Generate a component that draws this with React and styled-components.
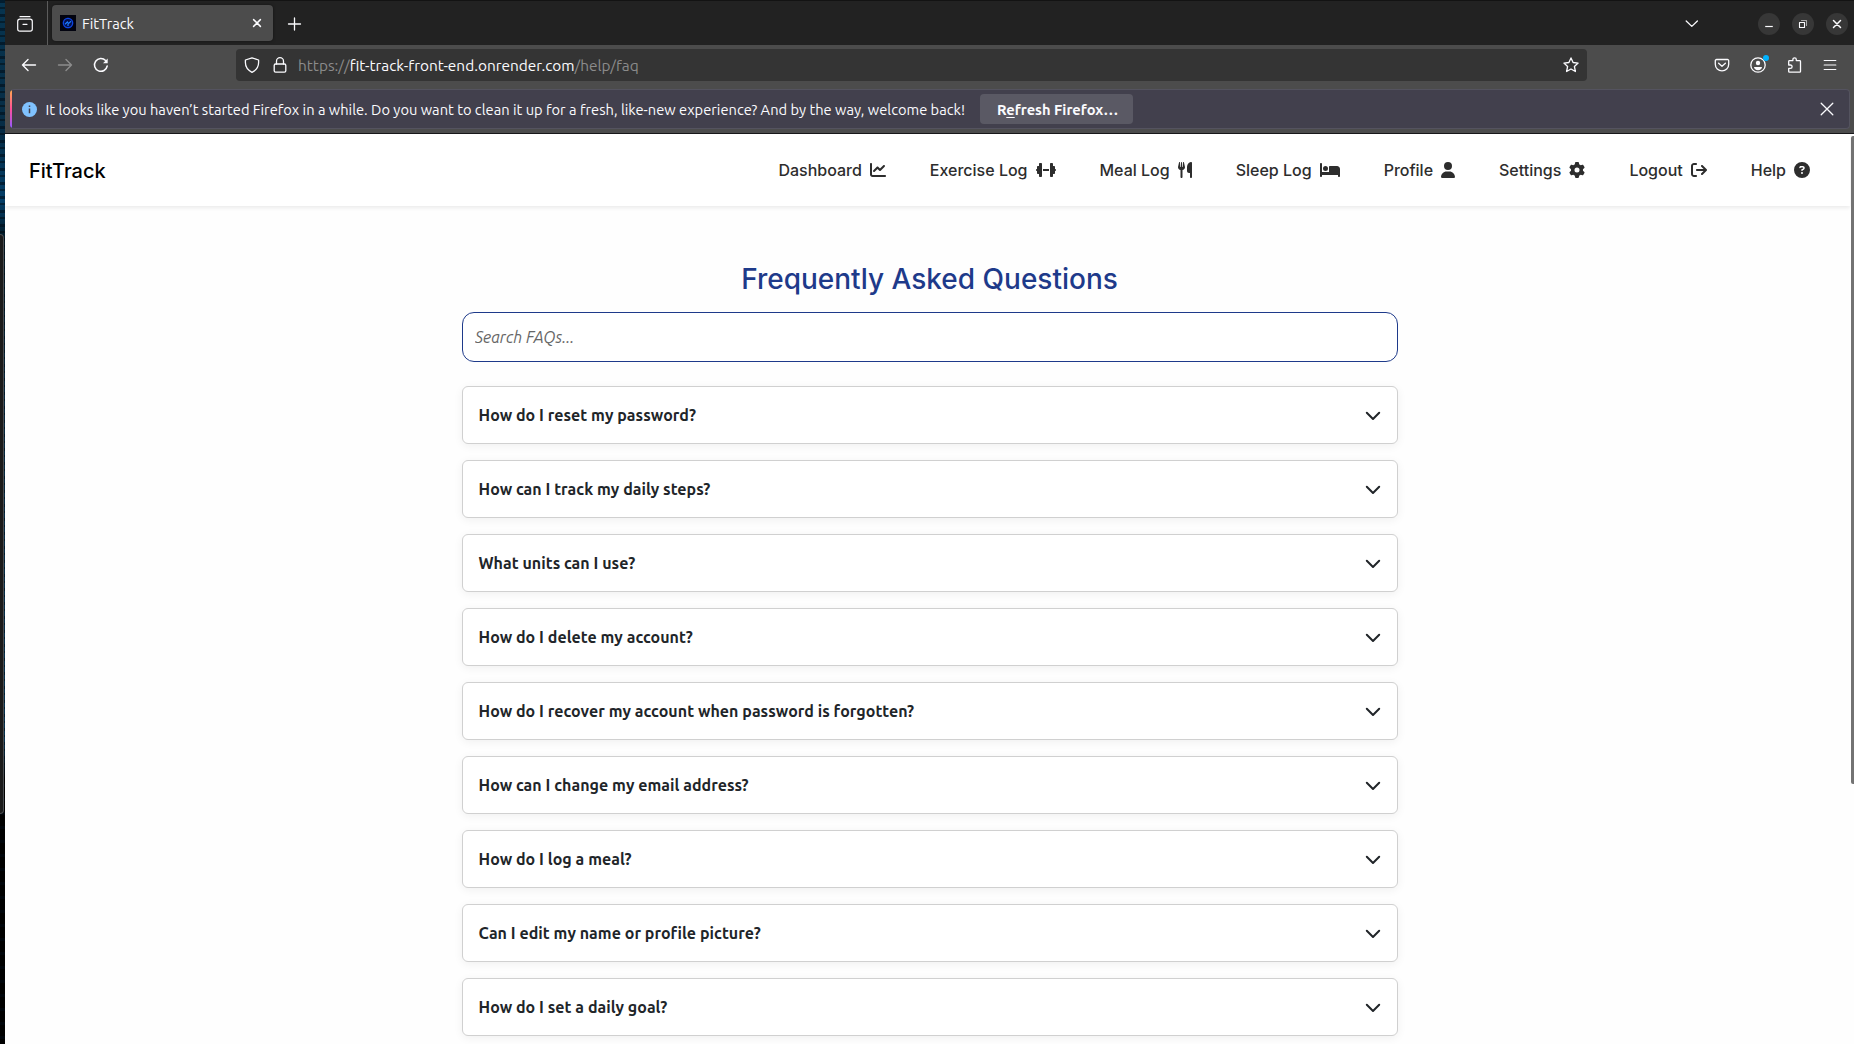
import React from "react";
import styled, { createGlobalStyle } from "styled-components";
import {
  FaChartLine,
  FaDumbbell,
  FaUtensils,
  FaBed,
  FaUser,
  FaGear,
  FaArrowRightFromBracket,
  FaCircleQuestion,
} from "react-icons/fa6";

const ui = `Ubuntu, "Noto Sans", "Open Sans", sans-serif`;
const inter = `Inter, "Liberation Sans", sans-serif`;

const GlobalStyle = createGlobalStyle`
  *, *::before, *::after { box-sizing: border-box; }
  body { margin: 0; background: #000; overflow: hidden; }
  button, input { font: inherit; color: inherit; }
`;

const Screen = styled.div`
  display: flex;
  width: 1854px;
  height: 1044px;
  overflow: hidden;
`;

const Desktop = styled.div`
  flex: none;
  width: 5px;
  display: flex;
  flex-direction: column;
  background:
    repeating-linear-gradient(180deg, rgba(0, 10, 20, 0.55) 0 3px, transparent 3px 7px, rgba(0, 0, 0, 0.4) 7px 9px, transparent 9px 14px),
    linear-gradient(180deg, #07344f 0, #062c45 130px, #05406a 200px, #021722 240px, #04263c 400px, #03314f 740px, #000 780px);
`;

const BackWindow = styled.div`
  margin-top: 234px;
  width: 4px;
  height: 580px;
  background: #1b1b1b;
  border: 1px solid #4a4d50;
  border-left: 0;
  border-radius: 0 5px 5px 0;
`;

const Browser = styled.div`
  flex: 1;
  min-width: 0;
  display: flex;
  flex-direction: column;
  font-family: ${ui};
  color: #fbfbfe;
`;

const TabStrip = styled.div`
  display: flex;
  height: 45px;
  flex: none;
  border-top: 1px solid #131313;
  background: #222;
`;

const ViewButton = styled.div`
  width: 43px;
  border-right: 1px solid #5c5c5c;
  display: flex;
  align-items: center;
  padding: 2px 0 0 12px;
`;

const Tab = styled.div`
  display: flex;
  align-items: center;
  width: 221px;
  height: 36px;
  margin: 4px 0 0 4px;
  padding: 0 8px;
  border-radius: 4px;
  background: #4c4c4c;
  box-shadow: 0 0 3px rgba(0, 0, 0, 0.5);
`;

const TabTitle = styled.span`
  flex: 1;
  margin-left: 6px;
  padding-top: 1px;
  font-size: 14.67px;
  line-height: 20px;
`;

const NewTab = styled.div`
  display: flex;
  align-items: center;
  margin-left: 14px;
  padding-top: 1px;
`;

const WindowControls = styled.div`
  display: flex;
  align-items: center;
  margin-left: auto;
  padding: 1px 6px 0 0;
  gap: 12px;
`;

const TabsMenu = styled.div`
  display: flex;
  margin-right: 46px;
`;

const RoundButton = styled.div`
  display: grid;
  place-items: center;
  width: 22px;
  height: 22px;
  border-radius: 50%;
  background: #373737;
`;

const NavBar = styled.div`
  display: flex;
  align-items: center;
  height: 40px;
  flex: none;
  padding-left: 16px;
  background: #4c4c4c;
`;

const NavButtons = styled.div`
  display: flex;
  gap: 20px;
  width: 215px;
`;

const UrlBar = styled.div`
  display: flex;
  align-items: center;
  width: 1351px;
  height: 32px;
  padding: 0 8px;
  border-radius: 4px;
  background: #343434;
`;

const LockSlot = styled.span`
  display: flex;
  margin-left: 12px;
`;

const Url = styled.span`
  flex: 1;
  margin-left: 10px;
  font-size: 15.4px;
  color: #8b8b8b;
  white-space: nowrap;
`;

const Host = styled.span`
  color: #fbfbfe;
`;

const Toolbar = styled.div`
  display: flex;
  gap: 20px;
  margin-left: 127px;
`;

const AccountSlot = styled.div`
  position: relative;
  display: flex;
`;

const AccountDot = styled.span`
  position: absolute;
  top: -2px;
  right: -3px;
  width: 6px;
  height: 6px;
  border-radius: 50%;
  background: #00b3ff;
`;

const NoticeArea = styled.div`
  flex: none;
  height: 49px;
  padding: 4px 4px 0 5px;
  background: #4c4c4c;
  border-bottom: 1px solid #18181a;
`;

const Notice = styled.div`
  display: flex;
  align-items: center;
  height: 40px;
  border: 1px solid #54535f;
  border-left: 0;
  border-radius: 4px;
  overflow: hidden;
  background: #42404d;
`;

const NoticeStripe = styled.span`
  width: 2px;
  align-self: stretch;
  margin-right: 10px;
  background: linear-gradient(180deg, #ffa94d 0, #ff4f9a 50%, #9059ff 100%);
`;

const NoticeText = styled.span`
  width: 925.5px;
  margin-left: 8.5px;
  font-size: 14.67px;
  letter-spacing: 0.01px;
  white-space: nowrap;
`;

const NoticeButton = styled.button`
  width: 153px;
  height: 30px;
  margin-left: 9px;
  padding: 0 0 0 2px;
  border: 0;
  border-radius: 4px;
  background: #5a5964;
  font-size: 14.67px;
  font-weight: 700;
  white-space: nowrap;
`;

const AccessKey = styled.u`
  text-underline-offset: 2px;
`;

const NoticeClose = styled.span`
  display: flex;
  margin-left: auto;
  padding-right: 14px;
`;

const Viewport = styled.div`
  flex: 1;
  min-height: 0;
  display: flex;
  background: #fefefe;
  color: #212529;
`;

const Page = styled.div`
  flex: 1;
  min-width: 0;
  display: flex;
  flex-direction: column;
`;

const ScrollTrack = styled.div`
  width: 4px;
  padding: 2px 0 0 1px;
`;

const ScrollThumb = styled.div`
  width: 3px;
  height: 648px;
  border-radius: 2px 0 0 2px;
  background: #737373;
`;

const SiteHeader = styled.header`
  display: flex;
  align-items: center;
  justify-content: space-between;
  height: 72px;
  flex: none;
  padding: 0 40px 0 24px;
  background: #fff;
  box-shadow: 0 2px 4px rgba(0, 0, 0, 0.08);
  font-family: ${inter};
  font-weight: 500;
`;

const Brand = styled.div`
  padding-top: 1px;
  color: #000;
  font-size: 20px;
`;

const Links = styled.nav`
  display: flex;
  gap: 44px;
`;

const NavLink = styled.a`
  display: flex;
  align-items: center;
  gap: 8px;
  color: #2d2d2d;
  font-size: 16px;
  line-height: 24px;
  white-space: nowrap;

  svg {
    width: ${(p) => p.$iconWidth}px;
    height: 16px;
  }
`;

const Content = styled.main`
  display: flex;
  flex-direction: column;
  width: 936px;
  margin: 56px 0 0 457px;
`;

const Title = styled.h1`
  margin: 0 0 16px;
  height: 34px;
  padding-right: 1px;
  font-family: ${inter};
  font-weight: 500;
  font-size: 28px;
  line-height: 34px;
  text-align: center;
  color: #1e3a8a;
`;

const Search = styled.input`
  width: 100%;
  height: 50px;
  margin-bottom: 24px;
  padding: 0 12px;
  border: 1px solid #1e3a8a;
  border-radius: 12px;
  outline: 0;
  background: #fff;
  font-size: 16px;
  &::placeholder {
    color: #666;
    opacity: 1;
    font-style: italic;
  }
`;

const FaqList = styled.div`
  display: flex;
  flex-direction: column;
  gap: 16px;
`;

const FaqCard = styled.div`
  display: flex;
  align-items: center;
  justify-content: space-between;
  height: 58px;
  padding: 0 16px 0 15.5px;
  border: 1px solid #d0d0d0;
  border-radius: 6px;
  background: #fff;
  box-shadow: 0 2px 10px rgba(0, 0, 0, 0.06);
`;

const Question = styled.span`
  font-size: 16px;
  font-weight: 600;
  letter-spacing: 0.03px;
  white-space: nowrap;
`;

function Glyph({ size = 16, color = "#fbfbfe", stroke = 1.3, children }) {
  return (
    <svg width={size} height={size} viewBox="0 0 16 16" fill="none" stroke={color} strokeWidth={stroke} strokeLinecap="round" strokeLinejoin="round">
      {children}
    </svg>
  );
}

const links = [
  { label: "Dashboard", Icon: FaChartLine, width: 16 },
  { label: "Exercise Log", Icon: FaDumbbell, width: 20 },
  { label: "Meal Log", Icon: FaUtensils, width: 14 },
  { label: "Sleep Log", Icon: FaBed, width: 20 },
  { label: "Profile", Icon: FaUser, width: 14 },
  { label: "Settings", Icon: FaGear, width: 16 },
  { label: "Logout", Icon: FaArrowRightFromBracket, width: 16 },
  { label: "Help", Icon: FaCircleQuestion, width: 16 },
];

const faqs = [
  "How do I reset my password?",
  "How can I track my daily steps?",
  "What units can I use?",
  "How do I delete my account?",
  "How do I recover my account when password is forgotten?",
  "How can I change my email address?",
  "How do I log a meal?",
  "Can I edit my name or profile picture?",
  "How do I set a daily goal?",
];

export default function App() {
  return (
    <Screen>
      <GlobalStyle />
      <Desktop>
        <BackWindow />
      </Desktop>
      <Browser>
        <TabStrip>
          <ViewButton>
            <Glyph stroke={1.2}>
              <path d="M3 .7h10" />
              <rect x=".7" y="3.2" width="14.6" height="12" rx="2.2" />
              <path d="M6 8.3h4" />
            </Glyph>
          </ViewButton>
          <Tab>
            <svg width="16" height="16" viewBox="0 0 16 16">
              <rect width="16" height="16" fill="#02030f" />
              <circle cx="8" cy="8" r="5.6" fill="#04104e" />
              <circle cx="8" cy="8" r="4.6" fill="none" stroke="#0d46e0" strokeWidth="1.3" />
              <path d="M5 9.2 7.4 7l1 1.6L11 6.2M8 9v2" stroke="#1c7dff" strokeWidth="1.2" fill="none" />
            </svg>
            <TabTitle>FitTrack</TabTitle>
            <Glyph stroke={1.5}>
              <path d="m4.6 4.6 6.8 6.8M11.4 4.6l-6.8 6.8" />
            </Glyph>
          </Tab>
          <NewTab>
            <Glyph stroke={1.3}>
              <path d="M7.5 2v12M1.5 8h12" />
            </Glyph>
          </NewTab>
          <WindowControls>
            <TabsMenu>
              <Glyph stroke={1.3}>
                <path d="m2.2 5 5.6 5.4L13.4 5" />
              </Glyph>
            </TabsMenu>
            <RoundButton>
              <Glyph stroke={1.2}>
                <path d="M4.2 10.5h7.6" strokeLinecap="butt" />
              </Glyph>
            </RoundButton>
            <RoundButton>
              <Glyph stroke={1.1}>
                <path d="M4.5 6.5h5v5h-5z" />
                <path d="M6.5 4.5h5v5" stroke="#aaa" />
              </Glyph>
            </RoundButton>
            <RoundButton>
              <Glyph stroke={1.5}>
                <path d="m4.5 4.5 7 7M11.5 4.5l-7 7" />
              </Glyph>
            </RoundButton>
          </WindowControls>
        </TabStrip>

        <NavBar>
          <NavButtons>
            <Glyph stroke={1.4}>
              <path d="M14.5 8H1.5M7 2.6 1.5 8 7 13.4" />
            </Glyph>
            <Glyph color="#8c8c8c" stroke={1.4}>
              <path d="M1.5 8h13M9 2.6 14.5 8 9 13.4" />
            </Glyph>
            <Glyph stroke={1.5}>
              <path d="M14.2 9A6.4 6.4 0 1 1 12.6 3.6" />
              <path d="M14.7 1.5v4.7H10z" fill="#fbfbfe" stroke="none" />
            </Glyph>
          </NavButtons>
          <UrlBar>
            <Glyph>
              <path d="M8 .8 14.6 3v2.6c0 4-2.3 7.6-6.6 9.7C3.7 13.2 1.4 9.6 1.4 5.6V3z" />
            </Glyph>
            <LockSlot>
              <Glyph>
                <rect x="2.2" y="7" width="11.6" height="8.2" rx="1.4" />
                <path d="M4.5 7V4.2a3.5 3.5 0 0 1 7 0V7" />
              </Glyph>
            </LockSlot>
            <Url>
              https://<Host>fit-track-front-end.onrender.com</Host>/help/faq
            </Url>
            <Glyph>
              <path d="m8 .9 2.1 4.6 5 .6-3.7 3.4 1 5L8 12l-4.400 2.500 1-5L.9 6.100l5-.6z" />
            </Glyph>
          </UrlBar>
          <Toolbar>
            <Glyph>
              <path d="M2.5 2.5h11a1.2 1.2 0 0 1 1.2 1.2v3.500a6.700 6.700 0 0 1-13.400 0V3.700a1.200 1.200 0 0 1 1.200-1.200z" />
              <path d="M4.6 6.2 8 9.300l3.400-3.100" />
            </Glyph>
            <AccountSlot>
              <Glyph>
                <circle cx="8" cy="8" r="7.2" />
                <circle cx="8" cy="6" r="2.2" fill="#fbfbfe" stroke="none" />
                <path d="M4 10h8c0 2-1.8 3.200-4 3.200S4 12 4 10z" fill="#fbfbfe" stroke="none" />
              </Glyph>
              <AccountDot />
            </AccountSlot>
            <Glyph>
              <path d="M2.700 7V4.400a.8.8 0 0 1 .8-.8h3.400V2.500a1.700 1.700 0 0 1 3.400 0v1.100h3.400a.8.8 0 0 1 .8.8v10a.8.8 0 0 1-.8.8H3.500a.8.8 0 0 1-.8-.8v-3h1.700a1.700 1.700 0 0 0 0-3.400H2.700z" />
            </Glyph>
            <Glyph stroke={1.2}>
              <path d="M2.200 3.500h11.600M2.200 8h11.600M2.200 12.500h11.600" />
            </Glyph>
          </Toolbar>
        </NavBar>

        <NoticeArea>
          <Notice>
            <NoticeStripe />
            <svg width="15" height="15" viewBox="0 0 15 15">
              <circle cx="7.5" cy="7.5" r="7.5" fill="#80c2ff" />
              <path d="M7.5 6.6v4.7M7.5 3.6v1.5" stroke="#42404d" strokeWidth="1.5" />
            </svg>
            <NoticeText>
              It looks like you haven’t started Firefox in a while. Do you want to clean it up for a fresh, like-new experience? And by the way, welcome back!
            </NoticeText>
            <NoticeButton>
              R<AccessKey>e</AccessKey>fresh Firefox…
            </NoticeButton>
            <NoticeClose>
              <Glyph stroke={1.3}>
                <path d="m2.2 2.2 11.6 11.6M13.8 2.2 2.2 13.8" />
              </Glyph>
            </NoticeClose>
          </Notice>
        </NoticeArea>

        <Viewport>
          <Page>
            <SiteHeader>
              <Brand>FitTrack</Brand>
              <Links>
                {links.map(({ label, Icon, width }) => (
                  <NavLink key={label} $iconWidth={width}>
                    {label}
                    <Icon />
                  </NavLink>
                ))}
              </Links>
            </SiteHeader>
            <Content>
              <Title>Frequently Asked Questions</Title>
              <Search placeholder="Search FAQs..." />
              <FaqList>
                {faqs.map((text) => (
                  <FaqCard key={text}>
                    <Question>{text}</Question>
                    <Glyph color="#212529" stroke={2}>
                      <path d="m1.8 5.8 6.2 6.2 6.2-6.2" />
                    </Glyph>
                  </FaqCard>
                ))}
              </FaqList>
            </Content>
          </Page>
          <ScrollTrack>
            <ScrollThumb />
          </ScrollTrack>
        </Viewport>
      </Browser>
    </Screen>
  );
}
